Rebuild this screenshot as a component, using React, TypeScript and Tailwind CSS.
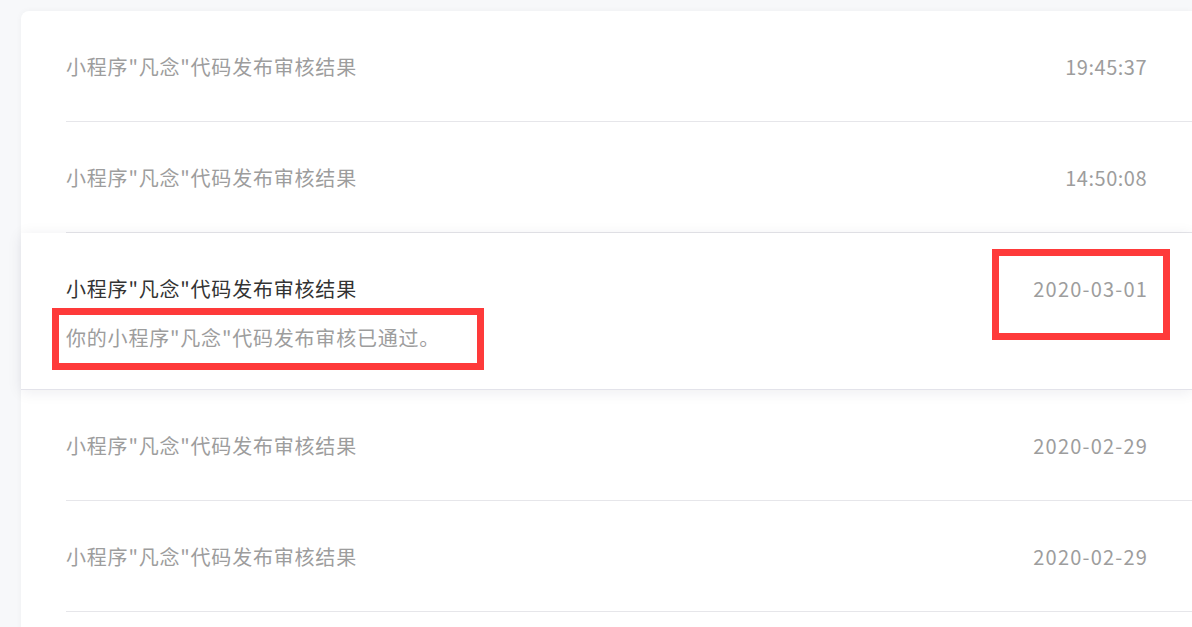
const ROWS_TOP = [
  { title: '小程序"凡念"代码发布审核结果', time: "19:45:37" },
  { title: '小程序"凡念"代码发布审核结果', time: "14:50:08" },
];

const ROWS_BOTTOM = [
  { title: '小程序"凡念"代码发布审核结果', time: "2020-02-29" },
  { title: '小程序"凡念"代码发布审核结果', time: "2020-02-29" },
];

const font = "font-['Noto_Sans_CJK_SC','Noto_Sans',sans-serif]";

function Row({ title, time }: { title: string; time: string }) {
  const isDate = time.includes("-");
  return (
    <li className="ml-[45px] h-[111px] pr-[45px] pt-[2px] flex items-center justify-between border-b border-[#e6e6ea]">
      <span className="text-[20px] tracking-[0.8px] text-[#9d9d9d]">{title}</span>
      <span className={isDate ? "text-[20px] tracking-[1.2px] -mr-[1px] text-[#9d9d9d]" : "text-[20px] tracking-[0.5px] text-[#9d9d9d]"}>{time}</span>
    </li>
  );
}

export default function App() {
  return (
    <div className={`relative w-[1192px] h-[627px] overflow-hidden bg-[#f7f8fa] pt-[11px] pl-[21px] ${font}`}>
      <div className="bg-white rounded-tl-lg shadow-[0_0_6px_rgba(0,0,0,0.04)] h-[700px]">
        <ul>
          {ROWS_TOP.map((r, i) => (
            <Row key={i} {...r} />
          ))}

          {/* expanded / active message */}
          <li className="relative z-10 bg-white pl-[45px] pr-[45px] pt-[42px] pb-[37px] flex items-start justify-between border-b border-[#e3e3ea] shadow-[0_2px_14px_rgba(20,20,60,0.08)]">
            <div>
              <p className="text-[20px] leading-[28px] tracking-[0.8px] text-[#333333]">小程序"凡念"代码发布审核结果</p>
              <p className="mt-[21px] text-[20px] leading-[28px] tracking-[0.8px] text-[#9d9d9d]">你的小程序"凡念"代码发布审核已通过。</p>
            </div>
            <span className="text-[20px] leading-[28px] tracking-[1.2px] -mr-[1px] text-[#9d9d9d]">2020-03-01</span>
          </li>

          {ROWS_BOTTOM.map((r, i) => (
            <Row key={i} {...r} />
          ))}
        </ul>
      </div>

      {/* annotation boxes */}
      <div className="absolute left-[52px] top-[308px] w-[432px] h-[62px] border-[7px] border-[#fe3a3a] z-20" />
      <div className="absolute left-[992px] top-[249px] w-[178px] h-[91px] border-[7px] border-[#fe3a3a] z-20" />
    </div>
  );
}
